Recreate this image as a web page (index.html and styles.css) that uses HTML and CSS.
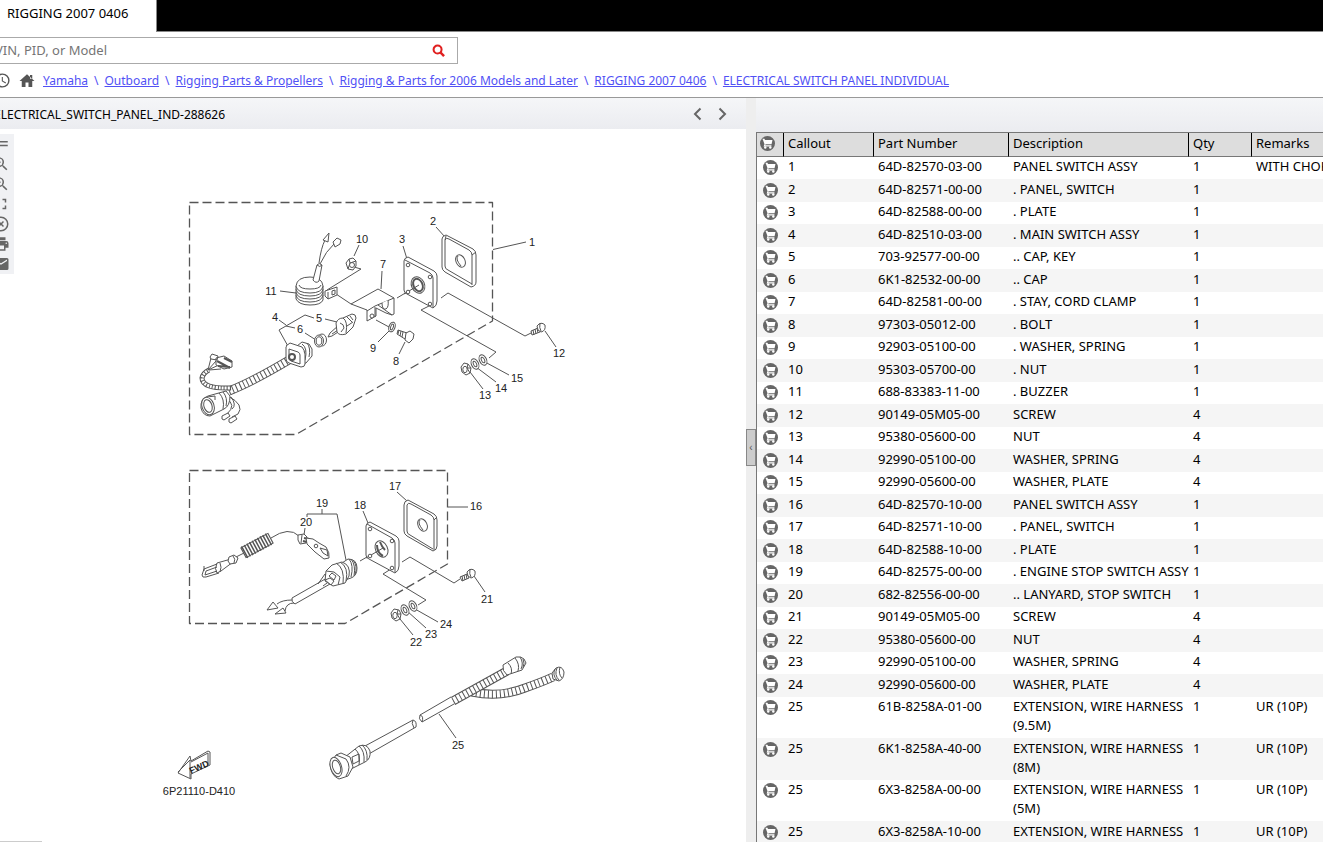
FILE: index.html
```
<!DOCTYPE html>
<html lang="en">
<head>
    <meta charset="UTF-8">
    <meta name="viewport" content="width=device-width, initial-scale=1.0">
    <title>RIGGING 2007 0406</title>
    <link rel="stylesheet" href="styles.css">
</head>
<body>
    <!-- Shared icons -->
    <svg class="sprite" aria-hidden="true">
        <symbol id="cart" viewBox="0 0 16 16">
            <circle cx="8" cy="8" r="8" fill="#666"/>
            <path d="M2.500 3h2.300l.5 1.200h8l-1 4.600H6l-.5 1h6.700v1.300H3.800l1-2.300-1.600-4.600z" fill="#fff"/>
            <circle cx="5.600" cy="12.300" r="1.300" fill="#fff"/>
            <circle cx="11" cy="12.300" r="1.300" fill="#fff"/>
        </symbol>
    </svg>

    <div class="viewer">
        <header class="tabs">
            <a class="tab" href="#">RIGGING 2007 0406</a>
        </header>

        <form class="search">
            <input type="text" placeholder="VIN, PID, or Model" aria-label="VIN, PID, or Model">
            <button type="button" aria-label="Search">
                <svg width="13" height="13" viewBox="0 0 14 14" fill="none" stroke="#e02020"><circle cx="6" cy="6" r="4.300" stroke-width="2.200"/><path d="M9 9l4 4" stroke-width="2.600"/></svg>
            </button>
        </form>

        <nav class="breadcrumb">
            <button type="button" aria-label="History">
                <svg width="17" height="17" viewBox="0 0 24 24" fill="#555"><path d="M12 2a10 10 0 1 0 0 20 10 10 0 0 0 0-20zm0 18a8 8 0 1 1 0-16 8 8 0 0 1 0 16zM12.500 7H11v6l5.250 3.150.75-1.230-4.500-2.670z"/></svg>
            </button>
            <button type="button" aria-label="Home">
                <svg width="18" height="18" viewBox="0 0 24 24" fill="#555"><path d="M10 20v-6h4v6h5v-8h3L12 3 2 12h3v8zM16 4h3v5h-3z"/></svg>
            </button>
            <a href="#">Yamaha</a><span>\</span>
            <a href="#">Outboard</a><span>\</span>
            <a href="#">Rigging Parts &amp; Propellers</a><span>\</span>
            <a href="#">Rigging &amp; Parts for 2006 Models and Later</a><span>\</span>
            <a href="#">RIGGING 2007 0406</a><span>\</span>
            <a href="#">ELECTRICAL SWITCH PANEL INDIVIDUAL</a>
        </nav>

        <main class="panes">
            <section class="pane">
                <div class="pane-header">
                    <h1>ELECTRICAL_SWITCH_PANEL_IND-288626</h1>
                    <button type="button" aria-label="Previous"><svg width="9" height="14" viewBox="0 0 9 14"><path d="M7.500 1.500L2 7l5.500 5.500" fill="none" stroke="#666" stroke-width="2"/></svg></button>
                    <button type="button" aria-label="Next"><svg width="9" height="14" viewBox="0 0 9 14"><path d="M1.500 1.500L7 7l-5.500 5.500" fill="none" stroke="#666" stroke-width="2"/></svg></button>
                </div>
                <div class="drawing">
                    <div class="tools">
                        <button type="button" aria-label="Move"><svg viewBox="0 0 24 24"><path d="M3 8h18v2H3zM3 13h18v2H3z"/></svg></button>
                        <button type="button" aria-label="Zoom in"><svg viewBox="0 0 24 24"><path d="M15.500 14h-.79l-.28-.27A6.500 6.500 0 1 0 13.730 14.430l.27.28v.79l5 4.990L20.490 19zM9.500 14a4.500 4.500 0 1 1 0-9 4.500 4.500 0 0 1 0 9zM12 10h-2v2H9v-2H7V9h2V7h1v2h2z"/></svg></button>
                        <button type="button" aria-label="Zoom out"><svg viewBox="0 0 24 24"><path d="M15.500 14h-.79l-.28-.27A6.500 6.500 0 1 0 13.730 14.430l.27.28v.79l5 4.990L20.490 19zM9.500 14a4.500 4.500 0 1 1 0-9 4.500 4.500 0 0 1 0 9zM7 9h5v1H7z"/></svg></button>
                        <button type="button" aria-label="Fit to window"><svg viewBox="0 0 24 24"><path d="M7 14H5v5h5v-2H7zM5 10h2V7h3V5H5zM17 17h-3v2h5v-5h-2zM14 5v2h3v3h2V5z"/></svg></button>
                        <button type="button" aria-label="Clear"><svg viewBox="0 0 24 24"><path d="M12 2a10 10 0 1 0 0 20 10 10 0 0 0 0-20zm0 18a8 8 0 1 1 0-16 8 8 0 0 1 0 16zM14.600 8L12 10.600 9.400 8 8 9.400l2.600 2.600L8 14.600 9.400 16l2.600-2.600 2.600 2.600 1.400-1.400-2.600-2.600L16 9.400z"/></svg></button>
                        <button type="button" aria-label="Print"><svg viewBox="0 0 24 24"><path d="M19 8H5a3 3 0 0 0-3 3v6h4v4h12v-4h4v-6a3 3 0 0 0-3-3zm-3 11H8v-5h8zm3-7a1 1 0 1 1 0-2 1 1 0 0 1 0 2zM18 3H6v4h12z"/></svg></button>
                        <button type="button" aria-label="Email"><svg viewBox="0 0 24 24"><path d="M20 4H4a2 2 0 0 0-2 2v12c0 1.100.9 2 2 2h16a2 2 0 0 0 2-2V6a2 2 0 0 0-2-2zm0 4l-8 5-8-5V6l8 5 8-5z"/></svg></button>
                    </div>

                    <svg class="diagram" viewBox="14 129 732 713" role="img" aria-label="Exploded view of the switch panel">
                        <!-- Assembly outlines -->
                        <g class="outline">
                            <path d="M189.500 202.500H492.500V321L296 434.500H189.500Z"/>
                            <path d="M189.500 470.500H447.500V564L345 623.500H189.500Z"/>
                        </g>

                        <!-- Leader lines -->
                        <g class="line">
                            <path d="M493 249.500L526 242M436 227l9 10M403 246l4 13M382 271l-1 18M359 245l-5 11M280 291l16 2M378 342l12-12M399 354l6-12M545 331l11 16M483 389l-13-17M496 382l-20-15M509 375l-24-13"/>
                            <path d="M279 320l7 5M314 318l-9-3-26 15 10 18M286 326l9 2M305 333l11 7M325 319l12 3"/>
                            <path d="M354 267l7 2-34 21M336 294l15 10M376 320l13 7M397 298l20-12M441 298l7-5 77 43 6-3M429 306l-8 4 75 42-7 6"/>
                            <path d="M448 507h20M397 492l10 9M363 511l5 12M322 509v5M307 517v-3h30l9 46M305 528l-1 7M474 576l11 16M413 635l-13-16M426 628l-19-17M438 622l-23-13M360 561l21-12M402 562l8-5 44 26 6-4M391 569l-8 5 43 26-8 5M439 714l17 24"/>
                        </g>

                        <!-- 1-3: upper panel and plate -->
                        <g class="part">
                            <path d="M442 239q0-3 4-4l27 14q3 2 3 6v27q0 4-5 5l-26-15q-3-2-3-5z"/>
                            <path d="M445 240v26q0 3 3 4l24 14M445 240q1-3 4-1l20 11q3 2 3 5v30M446 236l-1 4M476 252l-4 3"/>
                            <ellipse cx="460.500" cy="261" rx="4.500" ry="6.500" transform="rotate(-25 460.500 261)"/>
                            <path d="M458 256q-3 3 3 10"/>
                            <path d="M404 261q0-3 4-4l26 14q3 2 3 5v25q0 5-4 7l-26-14q-3-1-3-4z"/>
                            <path d="M405 260l25 13q3 2 3 5v30"/>
                            <ellipse cx="418" cy="285" rx="6.500" ry="8.500" transform="rotate(-25 418 285)"/>
                            <ellipse class="bold" cx="418" cy="285" rx="4.500" ry="6.500" transform="rotate(-25 418 285)"/>
                            <path d="M404 294l15-9"/>
                            <circle cx="408" cy="265" r="1.800"/><circle cx="430" cy="277" r="1.800"/><circle cx="408" cy="292" r="1.800"/><circle cx="430" cy="304" r="1.800"/>
                        </g>

                        <!-- 7: stay -->
                        <g class="part">
                            <path d="M351 304l27-15 16 9v16l-2 1-6-2-10-5v8l-9 5v-11z"/>
                            <path class="open" d="M367 311l8-5 19-8M375 307v10M378 305l14 10"/>
                            <path d="M382 303q0 7 4 6 3-2 2-9"/>
                            <circle cx="372" cy="316" r="2"/>
                        </g>

                        <!-- 10, 11: nut, buzzer -->
                        <g class="part">
                            <path d="M346 263l3-4 4-1 3 3v5l-3 4-5-1zM349 259l1 4-2 6M350 263l6-2"/><circle cx="352" cy="265" r="2.500"/>
                            <path d="M319 263q2-15 6-23M320 264q6-13 14-20"/>
                            <path d="M323 240l6-7-1 9zM333 242l4-4 4 2-1 4-5 3z"/>
                            <path d="M296 286q1-9 14-9 12 0 13 9v14q-2 5-13 5t-14-6z"/>
                            <path d="M296 286q1 7 14 7 12 0 13-7M296 289q1 7 14 7 12 0 13-7M296 292q1 7 14 7 12 0 13-7M296 295q1 7 14 7 12 0 13-7M299 285q1 4 11 4t11-4"/>
                            <path d="M313 280l4-15q2-3 5 0l-3 16q-3 3-6-1zM317 265q3 3 5 0"/>
                            <path d="M325 291l12-4v8l-9 4-3-3zM328 292v7M332 291l3-1v4l-3 1z"/>
                        </g>

                        <!-- 4-6: main switch, harness and key -->
                        <g class="hose"><path class="edge" d="M229 391Q252 382 289 360"/><path class="fill" d="M229 391Q252 382 289 360"/><path class="rib" d="M229 391Q252 382 289 360"/></g>
                        <g class="hose small"><path class="edge" d="M231 388Q202 389 202 378Q203 373 209 370"/><path class="fill" d="M231 388Q202 389 202 378Q203 373 209 370"/><path class="rib" d="M231 388Q202 389 202 378Q203 373 209 370"/></g>
                        <g class="part">
                            <path d="M208 370l3-12M208 370l8-9M208 370l13-6M209 370l12-1"/>
                            <path d="M210 357l2-3 6 2-1 4-6-1zM216 358l8-2 8 5v6l-8 2-8-4z"/><path class="bold" d="M217 361l13 7M218 366l12 1M224 358l8 4"/>
                            <path d="M297 346l5-4 7 2 3 5v7l-6 7-8 2z"/><path d="M302 344q6 4 3 16M307 343q4 5 2 14"/>
                            <path d="M286 347q1-3 4-2l11 4q4 2 4 5v10q0 3-4 3l-12-4q-3-1-3-4z"/><path d="M289 349l9 3q2 1 2 3v9l-9-3q-2-1-2-3zM286 346l4-3 12 4 3 5"/>
                            <circle class="bold" cx="292" cy="357" r="3"/>
                            <ellipse cx="322" cy="340" rx="4.500" ry="6"/><ellipse cx="319" cy="341" rx="4.500" ry="6"/><ellipse cx="319" cy="341" rx="2.800" ry="4.200"/>
                            <path d="M339 325l-9 8-2 4 4-1 3-2 8-5zM332 334l9-6"/>
                            <path d="M336 323q2-5 7-5l9-4q4 0 4 4l-3 9-7 7q-7 2-9-2z"/><path d="M343 318q5 3 3 15M347 317l5 5M350 316l3 4M347 326l6-4M340 323q4 1 4 5l-3 4"/>
                            <path d="M218 393q7 5 4 15M224 392q5 5 4 12M226 398q11 7 1 16M228 396q17 9 10 18l-6 3M231 397q6 8 1 12" class="open"/>
                            <path d="M226 391l-18 5q-8 3-7 12 2 8 9 8l14-7q6-3 6-13z"/><path class="open" d="M219 393q6 6 4 16M223 392q5 6 3 14"/>
                            <ellipse cx="208" cy="406" rx="6" ry="9" transform="rotate(-18 208 406)"/><ellipse cx="208" cy="406" rx="4" ry="6.500" transform="rotate(-18 208 406)"/>
                            <path d="M207 397l8-1v4"/>
                            <path d="M222 416l6-3 2 3-6 4-2-1zM229 419l6-3 2 3-6 4-2-1z"/>
                        </g>

                        <!-- Fasteners: 8, 9, 12-15 -->
                        <g class="part">
                            <ellipse cx="392" cy="327" rx="3" ry="5" transform="rotate(20 392 327)"/><ellipse cx="392" cy="327" rx="1.300" ry="3" transform="rotate(20 392 327)"/>
                            <path d="M398 330l9 3-2 6-8-5zM399 330l-1 4M401 331l-1 5M403 332l-1 5"/><path d="M406 333l4-2 4 3-1 5-4 4-4-3z"/>
                            <path d="M531 331l7-3 2 4-8 3zM533 330l1 5M535 329l1 5M537 328l1 5"/><path d="M537 326q4-5 8-1 1 6-4 7-4-1-4-6zM540 323q-1 5 1 8"/>
                            <ellipse cx="483" cy="360" rx="3.500" ry="5.500" transform="rotate(-25 483 360)"/><ellipse cx="483" cy="360" rx="1.500" ry="3" transform="rotate(-25 483 360)"/>
                            <ellipse cx="475" cy="364" rx="3.500" ry="5.500" transform="rotate(-25 475 364)"/><ellipse cx="475" cy="364" rx="1.500" ry="3" transform="rotate(-25 475 364)"/>
                            <path d="M461 367l3-4 4 1 3 4-1 5-4 2-4-3zM468 364l-1 4 3 5M467 368l4 0"/><ellipse cx="465" cy="369.500" rx="2.200" ry="3.200"/>
                        </g>

                        <!-- 17, 18: lower panel and plate -->
                        <g class="part">
                            <path d="M404 505q0-4 4-5l26 14q3 2 3 6v26q0 4-4 5l-26-15q-3-2-3-5z"/>
                            <path d="M407 505v26q0 3 3 4l23 14M407 505q1-3 4-1l20 11q3 2 3 5v30M437 517l-3 3"/>
                            <ellipse cx="422.500" cy="525" rx="4.500" ry="6.500" transform="rotate(-25 422.500 525)"/><path d="M420 520q-3 3 3 10"/>
                            <path d="M366 526q0-3 4-4l26 14q3 2 3 5v25q0 5-4 7l-26-14q-3-1-3-4z"/><path d="M367 524l25 14q3 2 3 5v30"/>
                            <ellipse cx="381.500" cy="549" rx="6" ry="8.500" transform="rotate(-25 381.500 549)"/><path class="bold" d="M377 545q0 8 6 11M380 542q2 5 5 8"/>
                            <path d="M366 558l17-10"/>
                            <circle cx="370" cy="529" r="1.800"/><circle cx="392" cy="541" r="1.800"/><circle cx="370" cy="556" r="1.800"/><circle cx="392" cy="568" r="1.800"/>
                        </g>

                        <!-- 20: lanyard -->
                        <g class="part">
                            <path d="M271 538q18-12 28-2M236 557l8-4" class="open"/>
                            <path d="M217 563l14-4 2 3-12 9-4 2q-3-4 0-10zM220 563q2 4 0 9"/>
                            <path class="open" d="M217 564l-13 5-2 6q0 3 4 2l13-4M217 567l-11 4-1 4 12-4M204 566v5"/>
                            <path d="M229 557l5-2 4 3-2 5-6 1-2-3zM233 556q3 3 1 7"/>
                            <path d="M298 535l6-1 3 3-1 6-6 1-2-4zM302 535l-1 8"/>
                            <path class="bold" d="M304 538l5 1M303 541l4 1"/>
                            <path d="M306 538l7 1 6 4 7 4q4 6 3 11l-5 1-9-7-8-8z"/><path d="M320 548l7 2 1 6-5-3z"/><circle cx="316" cy="546" r="1.800"/>
                        </g>
                        <g class="hose coil"><path class="edge" d="M243 553L271 538"/><path class="fill" d="M244 552.500L270 538.500"/><path class="rib" d="M244 552.500L270 538.500"/></g>

                        <!-- 19: engine stop switch -->
                        <g class="part">
                            <path d="M292 598l35-20 3 6-35 20q-4-2-3-6zM318 584l7-10 6 6-8 6"/>
                            <path class="open" d="M292 600q-10 0-15 4M294 603q-8 0-9 8"/>
                            <path d="M267 610l6-8 5 6zM275 614l8-6 3 5z"/>
                            <path d="M342 563l6-4q9 0 9 9 0 8-6 10l-6 2z"/><path d="M349 559q5 6 2 18M351 559q5 6 3 17M353 560q5 6 2 15"/>
                            <path d="M326 571l6-6 10-3q9 3 7 14l-4 7-12 3-8-5z"/><path d="M336 563q9 5 7 21M340 562q9 5 6 19"/><path d="M326 571l8 1 6 5-2 8"/><path d="M329 576l3-3 4 3-2 4zM325 580l5-2 4 3-3 4z"/>
                        </g>

                        <!-- Fasteners: 21-24 -->
                        <g class="part">
                            <path d="M460 577l7-3 2 4-7 3zM462 576l1 5M464 575l1 5M466 574l1 5"/><path d="M467 572q4-5 8-1 1 6-4 7-4-1-4-6zM470 569q-1 5 1 8"/>
                            <ellipse cx="413" cy="606" rx="3.500" ry="5.500" transform="rotate(-25 413 606)"/><ellipse cx="413" cy="606" rx="1.500" ry="3" transform="rotate(-25 413 606)"/>
                            <ellipse cx="405" cy="610" rx="3.500" ry="5.500" transform="rotate(-25 405 610)"/><ellipse cx="405" cy="610" rx="1.500" ry="3" transform="rotate(-25 405 610)"/>
                            <path d="M391 613l3-4 5 1 2 4-1 5-4 2-4-3zM398 610l-1 4 3 5M397 614l4 0"/><ellipse cx="395" cy="615.500" rx="2.200" ry="3.200"/>
                        </g>

                        <!-- 25: extension harness -->
                        <g class="hose"><path class="edge" d="M472 692Q500 698 525 688Q542 682 553 677"/><path class="fill" d="M472 692Q500 698 525 688Q542 682 553 677"/><path class="rib" d="M472 692Q500 698 525 688Q542 682 553 677"/></g>
                        <g class="hose"><path class="edge" d="M453 701L507 671"/><path class="fill" d="M453 701L507 671"/><path class="rib" d="M453 701L507 671"/></g>
                        <g class="part">
                            <path d="M451 697l-31 18q-2 4 2 7l32-18M420 715q4 1 2 7"/>
                            <path d="M503 665l13-8q5-1 8 2l2 4-4 7-15 5q-5-4-4-10z"/><path d="M508 663q5 5 3 11M515 658q5 6 3 13M520 657q4 6 1 12M523 659q2 4 0 9"/>
                            <path d="M552 673l4-5q6-3 8 4 0 7-5 9l-6-2z"/><path d="M555 669q-3 6 2 11M557 668q-3 7 2 12M560 667q-2 7 2 11"/>
                            <path d="M365 746l48-26q4 1 3 7l-49 28z"/><path d="M413 720q-2 3 1 8"/>
                            <path d="M345 757l14-11q8-3 11 5 1 8-5 11l-16 8z"/><path d="M359 746q6 5 5 16M362 745q6 5 5 15"/><path d="M355 749q6 5 4 16M352 757l7-3v7l-6 3z"/>
                            <path d="M330 764l6-9 5-2 9 4 3 10-5 9-9 3q-8-3-9-15z"/><path d="M336 755l10 4M346 759q6 8 0 17"/><ellipse cx="336" cy="767" rx="5.500" ry="10" transform="rotate(-18 336 767)"/><ellipse cx="336.500" cy="767" rx="3.800" ry="7" transform="rotate(-18 336.500 767)"/>
                        </g>

                        <!-- Forward arrow -->
                        <g class="part">
                            <path d="M178 773l12-17 1 5 17-10 2 1v13l-19 9v5z"/><path class="open" d="M178 772l12-12v18M191 762l17-9v12"/>
                        </g>
                        <text class="fwd" x="191" y="774" transform="rotate(-24 191 774)">FWD</text>

                        <g class="labels">
                            <text x="532" y="246">1</text><text x="433" y="225">2</text><text x="402" y="243">3</text><text x="362" y="243">10</text><text x="383" y="268">7</text>
                            <text x="271" y="295">11</text><text x="275" y="321">4</text><text x="319" y="322">5</text><text x="300" y="333">6</text><text x="373" y="352">9</text>
                            <text x="396" y="365">8</text><text x="559" y="357">12</text><text x="517" y="382">15</text><text x="501" y="392">14</text><text x="485" y="399">13</text>
                            <text x="476" y="510">16</text><text x="395" y="490">17</text><text x="360" y="509">18</text><text x="322" y="507">19</text><text x="306" y="526">20</text>
                            <text x="487" y="603">21</text><text x="446" y="628">24</text><text x="431" y="638">23</text><text x="416" y="646">22</text><text x="458" y="749">25</text>
                            <text x="199" y="795">6P21110-D410</text>
                        </g>
                    </svg>
                </div>
                <div class="status"></div>
            </section>

            <div class="splitter">
                <button type="button" aria-label="Collapse">‹</button>
            </div>

            <section class="pane">
                <div class="pane-header tall"></div>
                <table class="parts">
                    <colgroup>
                        <col class="col-cart"><col class="col-callout"><col class="col-part"><col class="col-desc"><col class="col-qty"><col>
                    </colgroup>
                    <thead>
                        <tr><th><button type="button" aria-label="Add all to cart"><svg><use href="#cart"/></svg></button></th><th>Callout</th><th>Part Number</th><th>Description</th><th>Qty</th><th>Remarks</th></tr>
                    </thead>
                    <tbody>
                        <tr><td><button type="button" aria-label="Add to cart"><svg><use href="#cart"/></svg></button></td><td>1</td><td>64D-82570-03-00</td><td>PANEL SWITCH ASSY</td><td>1</td><td>WITH CHOKE</td></tr>
                        <tr><td><button type="button" aria-label="Add to cart"><svg><use href="#cart"/></svg></button></td><td>2</td><td>64D-82571-00-00</td><td>. PANEL, SWITCH</td><td>1</td><td></td></tr>
                        <tr><td><button type="button" aria-label="Add to cart"><svg><use href="#cart"/></svg></button></td><td>3</td><td>64D-82588-00-00</td><td>. PLATE</td><td>1</td><td></td></tr>
                        <tr><td><button type="button" aria-label="Add to cart"><svg><use href="#cart"/></svg></button></td><td>4</td><td>64D-82510-03-00</td><td>. MAIN SWITCH ASSY</td><td>1</td><td></td></tr>
                        <tr><td><button type="button" aria-label="Add to cart"><svg><use href="#cart"/></svg></button></td><td>5</td><td>703-92577-00-00</td><td>.. CAP, KEY</td><td>1</td><td></td></tr>
                        <tr><td><button type="button" aria-label="Add to cart"><svg><use href="#cart"/></svg></button></td><td>6</td><td>6K1-82532-00-00</td><td>.. CAP</td><td>1</td><td></td></tr>
                        <tr><td><button type="button" aria-label="Add to cart"><svg><use href="#cart"/></svg></button></td><td>7</td><td>64D-82581-00-00</td><td>. STAY, CORD CLAMP</td><td>1</td><td></td></tr>
                        <tr><td><button type="button" aria-label="Add to cart"><svg><use href="#cart"/></svg></button></td><td>8</td><td>97303-05012-00</td><td>. BOLT</td><td>1</td><td></td></tr>
                        <tr><td><button type="button" aria-label="Add to cart"><svg><use href="#cart"/></svg></button></td><td>9</td><td>92903-05100-00</td><td>. WASHER, SPRING</td><td>1</td><td></td></tr>
                        <tr><td><button type="button" aria-label="Add to cart"><svg><use href="#cart"/></svg></button></td><td>10</td><td>95303-05700-00</td><td>. NUT</td><td>1</td><td></td></tr>
                        <tr><td><button type="button" aria-label="Add to cart"><svg><use href="#cart"/></svg></button></td><td>11</td><td>688-83383-11-00</td><td>. BUZZER</td><td>1</td><td></td></tr>
                        <tr><td><button type="button" aria-label="Add to cart"><svg><use href="#cart"/></svg></button></td><td>12</td><td>90149-05M05-00</td><td>SCREW</td><td>4</td><td></td></tr>
                        <tr><td><button type="button" aria-label="Add to cart"><svg><use href="#cart"/></svg></button></td><td>13</td><td>95380-05600-00</td><td>NUT</td><td>4</td><td></td></tr>
                        <tr><td><button type="button" aria-label="Add to cart"><svg><use href="#cart"/></svg></button></td><td>14</td><td>92990-05100-00</td><td>WASHER, SPRING</td><td>4</td><td></td></tr>
                        <tr><td><button type="button" aria-label="Add to cart"><svg><use href="#cart"/></svg></button></td><td>15</td><td>92990-05600-00</td><td>WASHER, PLATE</td><td>4</td><td></td></tr>
                        <tr><td><button type="button" aria-label="Add to cart"><svg><use href="#cart"/></svg></button></td><td>16</td><td>64D-82570-10-00</td><td>PANEL SWITCH ASSY</td><td>1</td><td></td></tr>
                        <tr><td><button type="button" aria-label="Add to cart"><svg><use href="#cart"/></svg></button></td><td>17</td><td>64D-82571-10-00</td><td>. PANEL, SWITCH</td><td>1</td><td></td></tr>
                        <tr><td><button type="button" aria-label="Add to cart"><svg><use href="#cart"/></svg></button></td><td>18</td><td>64D-82588-10-00</td><td>. PLATE</td><td>1</td><td></td></tr>
                        <tr><td><button type="button" aria-label="Add to cart"><svg><use href="#cart"/></svg></button></td><td>19</td><td>64D-82575-00-00</td><td>. ENGINE STOP SWITCH ASSY</td><td>1</td><td></td></tr>
                        <tr><td><button type="button" aria-label="Add to cart"><svg><use href="#cart"/></svg></button></td><td>20</td><td>682-82556-00-00</td><td>.. LANYARD, STOP SWITCH</td><td>1</td><td></td></tr>
                        <tr><td><button type="button" aria-label="Add to cart"><svg><use href="#cart"/></svg></button></td><td>21</td><td>90149-05M05-00</td><td>SCREW</td><td>4</td><td></td></tr>
                        <tr><td><button type="button" aria-label="Add to cart"><svg><use href="#cart"/></svg></button></td><td>22</td><td>95380-05600-00</td><td>NUT</td><td>4</td><td></td></tr>
                        <tr><td><button type="button" aria-label="Add to cart"><svg><use href="#cart"/></svg></button></td><td>23</td><td>92990-05100-00</td><td>WASHER, SPRING</td><td>4</td><td></td></tr>
                        <tr><td><button type="button" aria-label="Add to cart"><svg><use href="#cart"/></svg></button></td><td>24</td><td>92990-05600-00</td><td>WASHER, PLATE</td><td>4</td><td></td></tr>
                        <tr><td><button type="button" aria-label="Add to cart"><svg><use href="#cart"/></svg></button></td><td>25</td><td>61B-8258A-01-00</td><td>EXTENSION, WIRE HARNESS (9.5M)</td><td>1</td><td>UR (10P)</td></tr>
                        <tr><td><button type="button" aria-label="Add to cart"><svg><use href="#cart"/></svg></button></td><td>25</td><td>6K1-8258A-40-00</td><td>EXTENSION, WIRE HARNESS (8M)</td><td>1</td><td>UR (10P)</td></tr>
                        <tr><td><button type="button" aria-label="Add to cart"><svg><use href="#cart"/></svg></button></td><td>25</td><td>6X3-8258A-00-00</td><td>EXTENSION, WIRE HARNESS (5M)</td><td>1</td><td>UR (10P)</td></tr>
                        <tr><td><button type="button" aria-label="Add to cart"><svg><use href="#cart"/></svg></button></td><td>25</td><td>6X3-8258A-10-00</td><td>EXTENSION, WIRE HARNESS</td><td>1</td><td>UR (10P)</td></tr>
                    </tbody>
                </table>
            </section>
        </main>
    </div>
</body>
</html>
```
FILE: styles.css
```
* {
    box-sizing: border-box;
}
body {
    font-family: "Noto Sans", sans-serif;
    font-size: 13px;
    line-height: 19px;
    background-color: #fff;
    color: #000;
    margin: 0;
    height: 100vh;
    overflow: hidden;
}
button {
    background: none;
    border: none;
    padding: 0;
    cursor: pointer;
}
button svg {
    display: block;
}
.sprite {
    display: none;
}
.viewer {
    display: flex;
    flex-direction: column;
    height: 100vh;
    margin-left: -12px;
}
.tabs {
    display: flex;
    height: 32px;
    background-color: #000;
}
.tabs::after {
    content: "";
    flex: 1;
    border-bottom: 1px solid #888;
    border-left: 1px solid #888;
}
.tab {
    padding: 4px 28px 0 19px;
    background-color: #fff;
    color: #000;
    text-decoration: none;
}
.search {
    display: flex;
    width: 470px;
    height: 27px;
    margin-top: 5px;
    border: 1px solid #aaa;
}
.search input {
    flex: 1;
    padding: 0 6px;
    border: none;
    outline: none;
    font: inherit;
}
.search input::placeholder {
    color: #757575;
}
.search button {
    padding: 0 12px;
}
.breadcrumb {
    display: flex;
    align-items: center;
    height: 34px;
    padding-left: 6px;
    border-bottom: 1px solid #999;
    color: #5151f5;
    font-size: 12px;
    white-space: nowrap;
}
.breadcrumb button {
    margin-right: 7px;
}
.breadcrumb a {
    color: #5151f5;
}
.breadcrumb span {
    margin: 0 6px;
}
.panes {
    flex: 1;
    min-height: 0;
    display: grid;
    grid-template-columns: minmax(0, 758fr) 10px minmax(0, 567fr);
}
.pane {
    position: relative;
    overflow: hidden;
}
.pane-header {
    display: flex;
    align-items: center;
    gap: 16px;
    height: 31px;
    padding: 0 19px 0 6px;
    background: linear-gradient(#f5f6f8, #ebecf0);
}
.pane-header.tall {
    height: 34px;
}
.pane-header h1 {
    flex: 1;
    margin: 0;
    padding-top: 2px;
    font-size: 12px;
    font-weight: normal;
}
.drawing {
    display: flex;
    align-items: flex-start;
}
.tools {
    display: flex;
    flex-direction: column;
    align-items: center;
    width: 26px;
    margin-top: 5px;
    background-color: #f0f1f4;
}
.tools button {
    padding: 1px 0;
}
.tools svg {
    width: 18px;
    height: 18px;
    fill: #666;
}
.status {
    position: absolute;
    left: 0;
    bottom: 0;
    width: 54px;
    height: 1px;
    background-color: #ccc;
}
.splitter {
    background-color: #eee;
}
.splitter button {
    display: block;
    width: 10px;
    height: 37px;
    margin-top: 331px;
    background-color: #ccc;
    border: 1px solid #888;
    font-size: 10px;
    color: #555;
}

/* Exploded view */
.diagram {
    flex: 1;
    min-width: 0;
}
.diagram path, .diagram ellipse, .diagram circle {
    stroke: #555;
    stroke-linejoin: round;
}
.outline path {
    fill: none;
    stroke-width: 1.3;
    stroke-dasharray: 9 4;
}
.line path, .part .open {
    fill: none;
}
.part {
    fill: #fff;
}
.diagram .bold {
    fill: none;
    stroke-width: 2;
}
.hose path {
    fill: none;
}
.hose .edge {
    stroke-width: 9;
}
.diagram .hose .fill {
    stroke: #fff;
    stroke-width: 7;
}
.hose .rib {
    stroke-width: 8;
    stroke-dasharray: 1 3;
}
.small .edge {
    stroke-width: 5;
}
.diagram .small .fill {
    stroke-width: 3;
}
.small .rib {
    stroke-width: 4;
    stroke-dasharray: 1 2;
}
.coil .edge {
    stroke-width: 12;
}
.diagram .coil .fill {
    stroke-width: 10;
}
.coil .rib {
    stroke-width: 13;
    stroke-dasharray: 1.5 1.5;
}
.labels text {
    font-family: "Liberation Sans", Arial, sans-serif;
    font-size: 11px;
    text-anchor: middle;
    fill: #222;
}
.fwd {
    font-family: "Liberation Sans", Arial, sans-serif;
    font-size: 9px;
    font-weight: bold;
    fill: #222;
}

/* Parts list */
.parts {
    width: 100%;
    table-layout: fixed;
    border-collapse: separate;
    border-spacing: 0;
    border-top: 1px solid #777;
    border-left: 1px solid #777;
}
.col-cart {
    width: 27px;
}
.col-callout {
    width: 90px;
}
.col-part {
    width: 135px;
}
.col-desc {
    width: 180px;
}
.col-qty {
    width: 63px;
}
.parts th {
    height: 24px;
    padding: 0 0 2px 4px;
    background-color: #ddd;
    border-right: 1px solid #000;
    border-bottom: 1px solid #777;
    font-weight: normal;
    text-align: left;
}
.parts th:first-child {
    padding-left: 3px;
}
.parts th:last-child {
    border-right: none;
}
.parts td {
    padding: 0 0 3px 4px;
    vertical-align: top;
}
.parts tr:nth-child(even) td {
    padding-top: 1px;
    background-color: #f5f5f5;
}
.parts td:last-child {
    white-space: nowrap;
}
.parts td:first-child {
    padding-left: 6px;
}
.parts button {
    display: block;
}
.parts td button {
    margin-top: 3px;
}
.parts button svg {
    width: 15px;
    height: 15px;
}
```
